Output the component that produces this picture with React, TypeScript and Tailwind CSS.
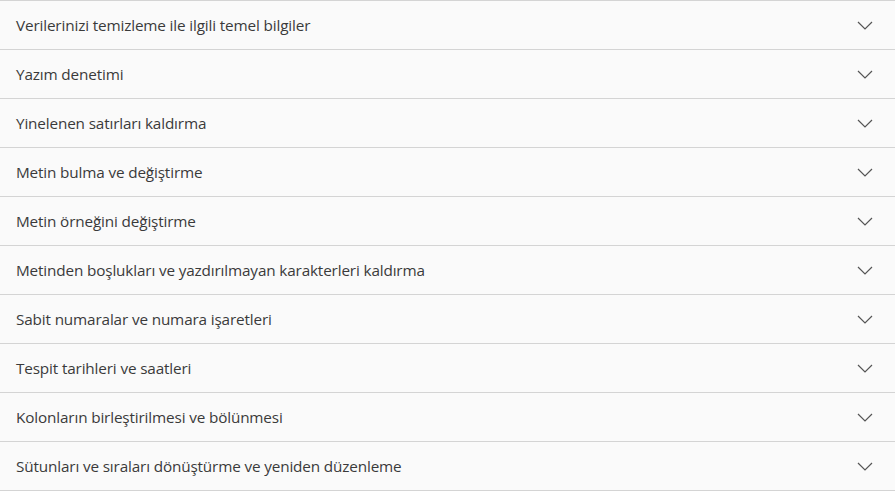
const items = [
  "Verilerinizi temizleme ile ilgili temel bilgiler",
  "Yazım denetimi",
  "Yinelenen satırları kaldırma",
  "Metin bulma ve değiştirme",
  "Metin örneğini değiştirme",
  "Metinden boşlukları ve yazdırılmayan karakterleri kaldırma",
  "Sabit numaralar ve numara işaretleri",
  "Tespit tarihleri ve saatleri",
  "Kolonların birleştirilmesi ve bölünmesi",
  "Sütunları ve sıraları dönüştürme ve yeniden düzenleme",
];

function Chevron() {
  return (
    <svg width="16" height="9" viewBox="0 0 16 9" fill="none" className="shrink-0">
      <path d="M1 1l7 7 7-7" stroke="#555" strokeWidth="1.2" />
    </svg>
  );
}

export default function App() {
  return (
    <div className="w-[895px] h-[491px] bg-white font-['Open_Sans',sans-serif]">
      <div className="border-b border-[#d4d4d4]">
        {items.map((title) => (
          <div
            key={title}
            className="h-[49px] border-t border-[#d4d4d4] bg-[#fafafa] flex items-center justify-between pl-4 pr-[22px]"
          >
            <span className="text-[15.3px] text-[#3a3a3a] tracking-[-0.15px]">{title}</span>
            <Chevron />
          </div>
        ))}
      </div>
    </div>
  );
}
